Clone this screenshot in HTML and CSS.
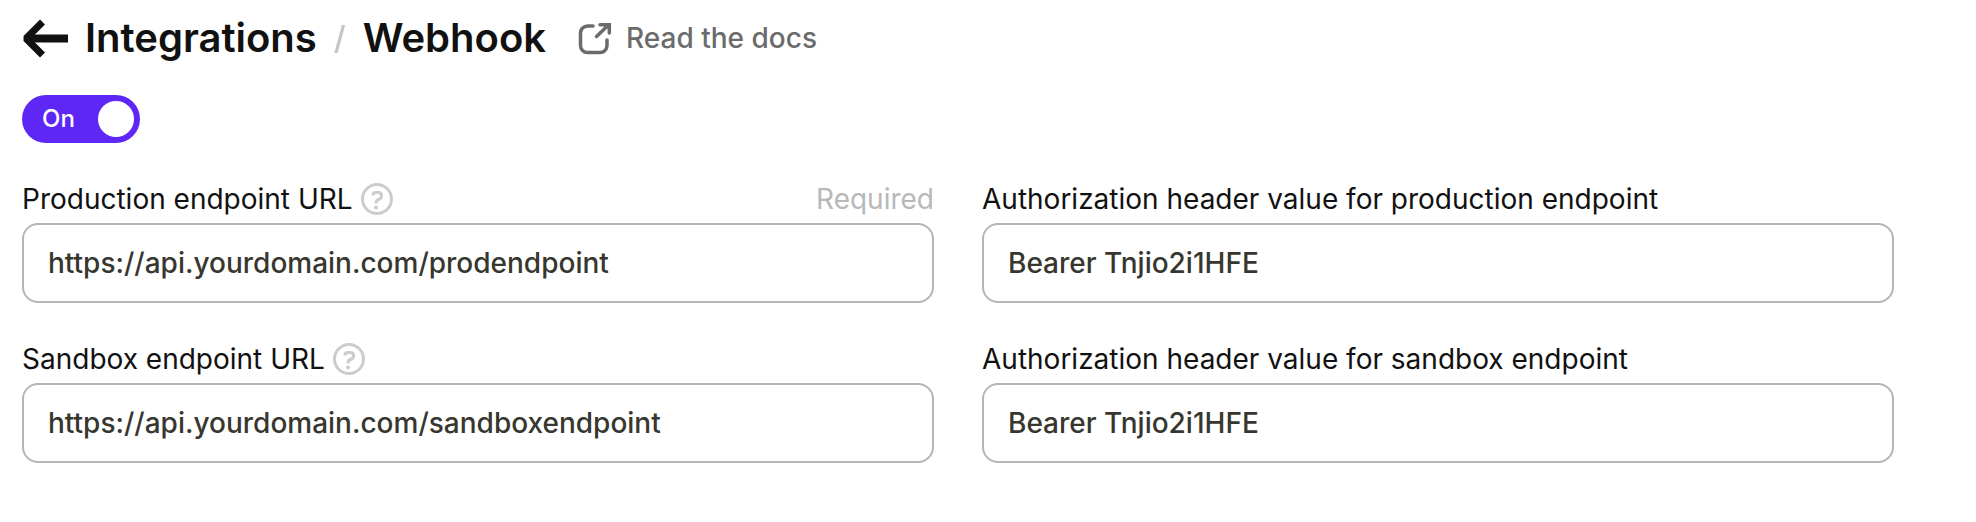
FILE: index.html
```html
<!DOCTYPE html>
<html lang="en">
<head>
  <meta charset="UTF-8">
  <meta name="viewport" content="width=device-width, initial-scale=1.0">
  <title>Webhook integration</title>
  <link rel="stylesheet" href="styles.css">
</head>
<body>
  <header>
    <nav class="breadcrumb">
      <a href="#" class="back" aria-label="Back">
        <svg width="46" height="40" viewBox="0 0 46 40" fill="none" stroke="currentColor" stroke-width="7" stroke-linejoin="bevel">
          <path d="M46 20.500H8" stroke-width="8"/>
          <path d="M20.500 4L4 20.500L20.500 37"/>
        </svg>
      </a>
      <a href="#" class="crumb">Integrations</a>
      <span class="slash">/</span>
      <h1 class="crumb">Webhook</h1>
    </nav>
    <a href="#" class="docs-link">
      <svg width="34" height="34" viewBox="0 0 34 34" fill="none" stroke="currentColor" stroke-width="3.500" stroke-linecap="round">
        <path d="M15 5H9.500a7 7 0 0 0-7 7v12.500a7 7 0 0 0 7 7h12.500a7 7 0 0 0 7-7V19"/>
        <path d="M18.500 15.500L30.500 4M22 3.700h9.300V12"/>
      </svg>
      Read the docs
    </a>
  </header>

  <main>
    <label class="switch">
      <span>On</span>
      <input type="checkbox" checked>
    </label>

    <form>
      <div class="form-group">
        <div class="label-row">
          <label for="prod-url">Production endpoint URL</label>
          <button type="button" class="help" aria-label="Help">
            <svg width="32" height="32" viewBox="0 0 32 32" fill="none" stroke="currentColor" stroke-width="3">
              <circle cx="16" cy="16" r="14.500"/>
              <path d="M12 12.500V12Q12 9.500 15 9.500H17.500Q20.500 9.500 20.500 12.500V13Q20.500 15.500 18 16.200Q15 17 15 20.500"/>
              <circle cx="15" cy="24.500" r="2" fill="currentColor" stroke="none"/>
            </svg>
          </button>
          <span class="hint">Required</span>
        </div>
        <input type="text" id="prod-url" value="https://api.yourdomain.com/prodendpoint" required>
      </div>

      <div class="form-group">
        <div class="label-row">
          <label for="prod-auth">Authorization header value for production endpoint</label>
        </div>
        <input type="text" id="prod-auth" value="Bearer Tnjio2i1HFE">
      </div>

      <div class="form-group">
        <div class="label-row">
          <label for="sandbox-url">Sandbox endpoint URL</label>
          <button type="button" class="help" aria-label="Help">
            <svg width="32" height="32" viewBox="0 0 32 32" fill="none" stroke="currentColor" stroke-width="3">
              <circle cx="16" cy="16" r="14.500"/>
              <path d="M12 12.500V12Q12 9.500 15 9.500H17.500Q20.500 9.500 20.500 12.500V13Q20.500 15.500 18 16.200Q15 17 15 20.500"/>
              <circle cx="15" cy="24.500" r="2" fill="currentColor" stroke="none"/>
            </svg>
          </button>
        </div>
        <input type="text" id="sandbox-url" value="https://api.yourdomain.com/sandboxendpoint">
      </div>

      <div class="form-group">
        <div class="label-row">
          <label for="sandbox-auth">Authorization header value for sandbox endpoint</label>
        </div>
        <input type="text" id="sandbox-auth" value="Bearer Tnjio2i1HFE">
      </div>
    </form>
  </main>
</body>
</html>
```
FILE: styles.css
```css
:root {
  --text-color: #111;
  --input-color: #37372f;
  --muted-color: #6b6b6b;
  --hint-color: #b8b8b8;
  --icon-color: #ccc;
  --border-color: #b5b5b5;
  --accent-color: #5f27f6;
}

* {
  box-sizing: border-box;
}

body {
  font-family: Inter, "Liberation Sans", sans-serif;
  font-size: 28px;
  line-height: 32px;
  margin: 0;
  padding: 12px 82px 40px 22px;
  background-color: #fff;
  color: var(--text-color);
}

a {
  color: inherit;
  text-decoration: none;
}

svg {
  display: block;
}

header {
  display: flex;
  align-items: center;
  gap: 32px;
  margin-bottom: 32px;
}

.breadcrumb {
  display: flex;
  align-items: center;
  gap: 17px;
}

.crumb {
  margin: 0;
  font-size: 40px;
  font-weight: 600;
  line-height: 51px;
}

.slash {
  color: #c4c4c4;
  font-size: 32px;
  font-weight: 500;
}

.docs-link {
  display: flex;
  align-items: center;
  gap: 14px;
  color: var(--muted-color);
  font-weight: 500;
}

.switch {
  display: flex;
  justify-content: space-between;
  align-items: center;
  width: 118px;
  height: 48px;
  padding: 0 6px 0 20px;
  border-radius: 24px;
  background-color: var(--accent-color);
  color: #fff;
  font-size: 24px;
  font-weight: 500;
  cursor: pointer;
}

/* the checkbox itself is drawn as the knob */
.switch input {
  appearance: none;
  width: 36px;
  height: 36px;
  margin: 0;
  border-radius: 50%;
  background-color: #fff;
}

form {
  display: grid;
  grid-template-columns: 1fr 1fr;
  gap: 40px 48px;
  margin-top: 40px;
}

.label-row {
  display: flex;
  align-items: center;
  gap: 8px;
  margin-bottom: 8px;
}

.help {
  padding: 0;
  border: none;
  background: none;
  color: var(--icon-color);
  cursor: pointer;
}

.hint {
  margin-left: auto;
  color: var(--hint-color);
}

input[type="text"] {
  display: block;
  width: 100%;
  height: 80px;
  padding: 0 24px;
  border: 2px solid var(--border-color);
  border-radius: 16px;
  background-color: #fff;
  color: var(--input-color);
  font-family: inherit;
  font-size: 28px;
  font-weight: 500;
}

input[type="text"]:focus {
  border-color: var(--accent-color);
  outline: none;
}
```
